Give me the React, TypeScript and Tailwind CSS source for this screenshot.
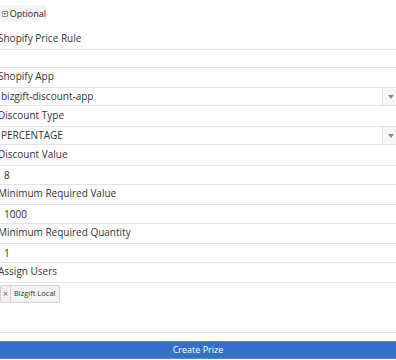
import type { ReactNode } from "react";

const font = { fontFamily: '"Open Sans", "Noto Sans", sans-serif' };

function Label({ children }: { children: ReactNode }) {
  return <div className="mb-[4px] h-[14px] pl-[2px] text-[10px] leading-[14px] text-[#333]">{children}</div>;
}

function TextInput({ value, short }: { value?: string; short?: boolean }) {
  return (
    <div
      className={
        short
          ? "mb-[1px] flex h-[19px] items-center border border-[#e3e3e3] bg-white pl-[7px] text-[10px] text-[#333]"
          : "mb-[1px] flex h-[20px] items-center border border-[#e3e3e3] bg-white pl-[7px] text-[10px] text-[#333]"
      }
    >
      {value}
    </div>
  );
}

function SelectBox({ value }: { value: string }) {
  return (
    <div className="mb-[2px] flex h-[19px] items-stretch border border-[#e3e3e3] bg-white text-[10px] text-[#333]">
      <div className="flex flex-1 items-center pl-[4px]">{value}</div>
      <div className="flex w-[17px] items-center justify-center border-l border-[#e3e3e3] bg-[#f7f7f7]">
        <svg width="6" height="4" viewBox="0 0 6 4">
          <path d="M0 0h6L3 4z" fill="#888" />
        </svg>
      </div>
    </div>
  );
}

export default function App() {
  return (
    <div className="h-[360px] w-[396px] overflow-hidden bg-white" style={font}>
      <div className="-ml-[4px] w-[404px] pt-[5px]">
        <div className="mb-[9px] flex h-[17px] w-[50px] items-center gap-[2px] bg-[#f4f6f8] pl-[6px] text-[9px] text-[#222]">
          <svg width="10" height="10" viewBox="0 0 10 10">
            <rect x="0.5" y="0.5" width="9" height="9" rx="1" fill="none" stroke="#333" />
            <path d="M2.5 3.5h5L5 6.5z" fill="#333" />
          </svg>
          <span>Optional</span>
        </div>

        <Label>Shopify Price Rule</Label>
        <TextInput short />

        <Label>Shopify App</Label>
        <SelectBox value="bizgift-discount-app" />

        <Label>Discount Type</Label>
        <SelectBox value="PERCENTAGE" />

        <Label>Discount Value</Label>
        <TextInput value="8" />

        <Label>Minimum Required Value</Label>
        <TextInput value="1000" />

        <Label>Minimum Required Quantity</Label>
        <TextInput value="1" />

        <Label>Assign Users</Label>
        <div className="mb-[8px] h-[51px] border border-[#e3e3e3] bg-white pl-[3px] pt-[2px]">
          <div className="flex h-[18px] w-fit items-stretch whitespace-nowrap rounded-[2px] border border-[#d3d3d3] bg-[#f2f2f2] text-[7.5px] text-[#333]">
            <span className="flex w-[10px] items-center justify-center border-r border-[#d3d3d3] text-[9px] text-[#e0383e]">
              ×
            </span>
            <span className="flex items-center pl-[3px] pr-[4px]">Bizgift Local</span>
          </div>
        </div>

        <div className="flex h-[18px] items-center justify-center border border-[#5b8ad6] bg-[#356fc8] text-[9px] text-white">
          Create Prize
        </div>
      </div>
    </div>
  );
}
